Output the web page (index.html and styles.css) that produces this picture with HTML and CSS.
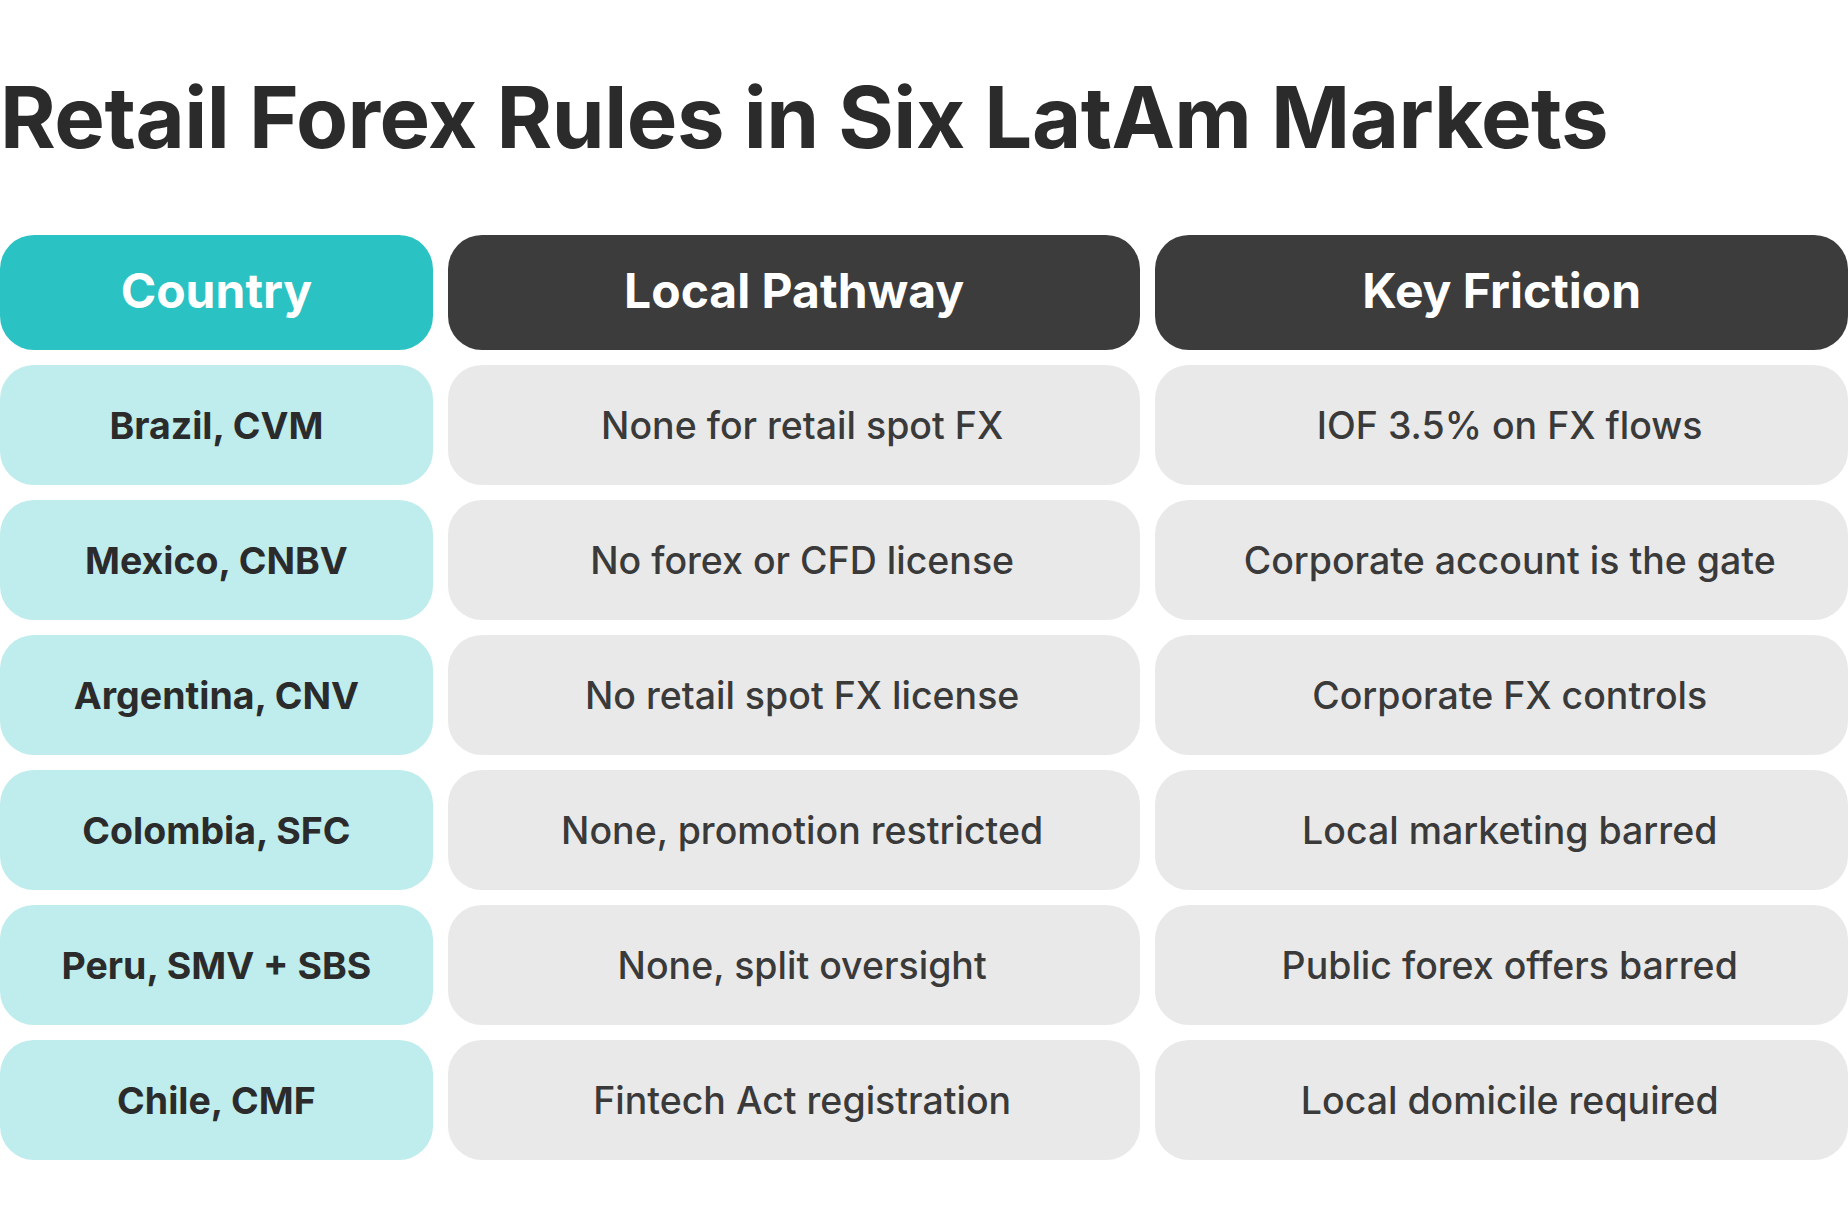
FILE: index.html
```html
<!DOCTYPE html>
<html lang="en">
<head>
<meta charset="utf-8">
<title>Retail Forex Rules in Six LatAm Markets</title>
<link rel="stylesheet" href="styles.css">
</head>
<body>
<main class="page">
  <h1 class="title">Retail Forex Rules in Six LatAm Markets</h1>
  <div class="table">
    <div class="cell head head-accent">Country</div>
    <div class="cell head">Local Pathway</div>
    <div class="cell head">Key Friction</div>

    <div class="cell country">Brazil, CVM</div>
    <div class="cell body">None for retail spot FX</div>
    <div class="cell body">IOF 3.5% on FX flows</div>

    <div class="cell country">Mexico, CNBV</div>
    <div class="cell body">No forex or CFD license</div>
    <div class="cell body">Corporate account is the gate</div>

    <div class="cell country">Argentina, CNV</div>
    <div class="cell body">No retail spot FX license</div>
    <div class="cell body">Corporate FX controls</div>

    <div class="cell country">Colombia, SFC</div>
    <div class="cell body">None, promotion restricted</div>
    <div class="cell body">Local marketing barred</div>

    <div class="cell country">Peru, SMV + SBS</div>
    <div class="cell body">None, split oversight</div>
    <div class="cell body">Public forex offers barred</div>

    <div class="cell country">Chile, CMF</div>
    <div class="cell body">Fintech Act registration</div>
    <div class="cell body">Local domicile required</div>
  </div>
</main>
</body>
</html>
```

FILE: styles.css
```css
* { box-sizing: border-box; }
html, body { margin: 0; padding: 0; background: #ffffff; }
body { font-family: Inter, "Noto Sans", "Liberation Sans", sans-serif; color: #2b2b2b; }
.page { width: 1848px; }
.title {
  margin: 75px 0 0 0;
  font-size: 85px;
  line-height: 85px;
  font-weight: 700;
  letter-spacing: -0.5px;
  color: #2b2b2b;
}
.table {
  margin-top: 75px;
  display: grid;
  grid-template-columns: 1fr 1.6fr 1.6fr;
  grid-template-rows: 115px repeat(6, 120px);
  gap: 15px;
}
.cell {
  display: flex;
  align-items: center;
  justify-content: center;
  border-radius: 34px;
  text-align: center;
}
.head {
  background: #3c3c3c;
  color: #ffffff;
  font-size: 48px;
  font-weight: 700;
  padding-bottom: 4px;
}
.head-accent { background: #2ac2c3; }
.country {
  background: #bfecec;
  color: #2b2b2b;
  font-size: 37.5px;
  font-weight: 700;
}
.body {
  background: #e9e9e9;
  color: #3a3a3a;
  font-size: 37.5px;
  font-weight: 500;
  padding-left: 16px;
}
```
